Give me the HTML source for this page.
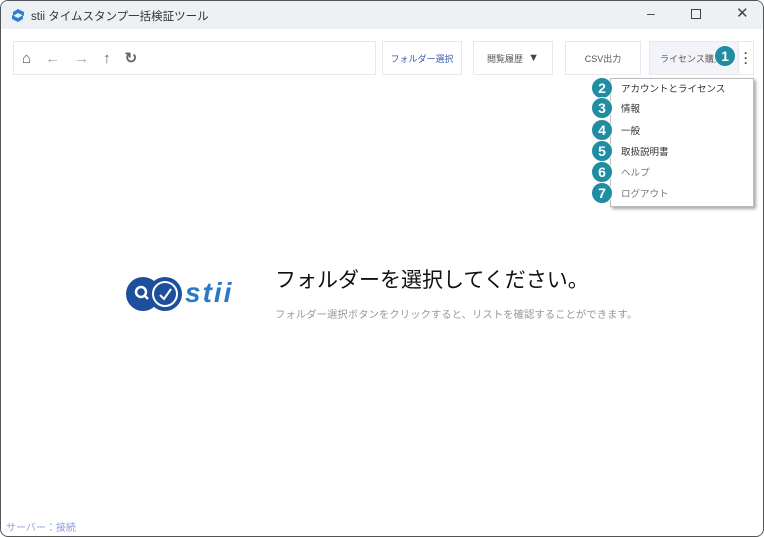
<!DOCTYPE html>
<html><head><meta charset="utf-8"><style>
*{margin:0;padding:0;box-sizing:border-box}
body{width:764px;height:537px;background:#fff;font-family:"Liberation Sans","Noto Sans CJK JP",sans-serif;position:relative;overflow:hidden}
.win{position:absolute;left:0;top:0;width:764px;height:537px;border:1.5px solid #555;border-radius:8px;overflow:hidden;background:#fff}
.title{height:28px;background:#eef1f4;position:relative;font-size:11px;color:#333}
.abs{position:absolute}
.box{position:absolute;border:1px solid #e6e8ee;background:#fff;font-size:9px;color:#555;display:flex;align-items:center;justify-content:center}
.badge{position:absolute;width:22px;height:22px;border-radius:50%;background:#1f8ea3;color:#fff;font-size:14px;font-weight:bold;display:flex;align-items:center;justify-content:center;border:1.5px solid #fff}
.mi{position:absolute;left:620px;font-size:9.5px;color:#333}
</style></head><body><div class="win">
<div class="title">
<svg class="abs" style="left:10px;top:7px" width="14" height="15" viewBox="0 0 14 15"><path d="M7 1L13 4V8L7 5L2 8V4Z" fill="#2b7fd4"/><path d="M7 14L1 11V7L7 10L12 7V11Z" fill="#2b7fd4"/></svg>
<span class="abs" style="left:30px;top:7px;font-size:11.5px">stii タイムスタンプ一括検証ツール</span>
<span class="abs" style="left:646px;top:4px;font-size:14px;color:#444">–</span>
<span class="abs" style="left:690px;top:8px;width:10px;height:10px;border:1px solid #444"></span>
<span class="abs" style="left:735px;top:3px;font-size:15px;color:#444">✕</span>
</div>
<div class="box" style="left:12px;top:40px;width:363px;height:34px;justify-content:flex-start;padding-left:8px;gap:14px;font-size:15px;font-weight:bold;color:#aaa">
<span style="color:#555">⌂</span><span>←</span><span>→</span><span style="color:#666">↑</span><span style="color:#666">↻</span></div>
<div class="box" style="left:381px;top:40px;width:80px;height:34px;color:#3b5aa8">フォルダー選択</div>
<div class="box" style="left:472px;top:40px;width:80px;height:34px">閲覧履歴&nbsp;&nbsp;<span style="font-size:11px;color:#444">▼</span></div>
<div class="box" style="left:564px;top:40px;width:76px;height:34px">CSV出力</div>
<div class="box" style="left:648px;top:40px;width:92px;height:34px;background:#f3f4f9;justify-content:flex-start;padding-left:10px">ライセンス購入</div>
<div class="box" style="left:737px;top:40px;width:16px;height:34px;font-size:12px;font-weight:bold;color:#444;line-height:5px;flex-direction:column">·<br>·<br>·</div>
<div class="badge" style="left:713px;top:44px">1</div>
<div class="abs" style="left:609px;top:77px;width:144px;height:129px;background:#fff;border:1px solid #bbb;box-shadow:2px 2px 3px rgba(0,0,0,.35)"></div>
<div class="badge" style="left:590px;top:76px">2</div><div class="mi" style="top:80px">アカウントとライセンス</div>
<div class="badge" style="left:590px;top:96px">3</div><div class="mi" style="top:100px">情報</div>
<div class="badge" style="left:590px;top:118px">4</div><div class="mi" style="top:122px">一般</div>
<div class="badge" style="left:590px;top:139px">5</div><div class="mi" style="top:143px">取扱説明書</div>
<div class="badge" style="left:590px;top:160px">6</div><div class="mi" style="top:164px;color:#777">ヘルプ</div>
<div class="badge" style="left:590px;top:181px">7</div><div class="mi" style="top:185px;color:#777">ログアウト</div>
<svg class="abs" style="left:124px;top:275px" width="60" height="36" viewBox="0 0 60 36"><circle cx="18" cy="18" r="17" fill="#1d4f9c"/><circle cx="40" cy="18" r="17" fill="#1d4f9c"/><circle cx="40" cy="18" r="12" fill="none" stroke="#fff" stroke-width="2"/><path d="M35 19L39 23L46 13" stroke="#fff" stroke-width="2" fill="none"/><circle cx="16" cy="16" r="5" fill="none" stroke="#fff" stroke-width="2.5"/><path d="M19 19L23 23" stroke="#fff" stroke-width="2.5"/></svg>
<div class="abs" style="left:184px;top:276px;font-size:28px;font-weight:bold;font-style:italic;color:#2a78c8;letter-spacing:2px">stii</div>
<div class="abs" style="left:274px;top:263px;font-size:21px;color:#111">フォルダーを選択してください。</div>
<div class="abs" style="left:274px;top:305px;font-size:10.4px;color:#999">フォルダー選択ボタンをクリックすると、リストを確認することができます。</div>
<div class="abs" style="left:5px;top:518px;font-size:10px;color:#8ea0d8">サーバー：接続</div>
</div></body></html>
